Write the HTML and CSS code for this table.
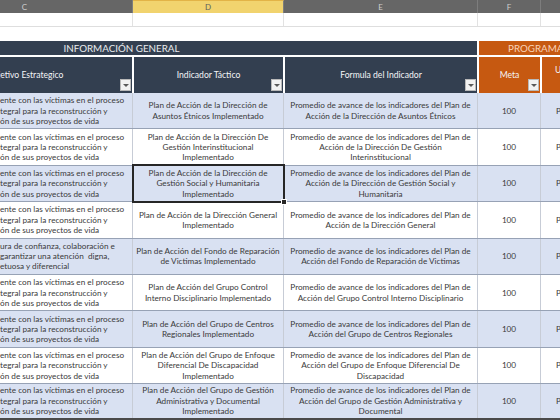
FILE: index.html
```html
<!DOCTYPE html>
<html lang="es">
<head>
<meta charset="utf-8">
<title>Plan de Acción</title>
<link rel="stylesheet" href="styles.css">
</head>
<body>
<div class="sheet">
  <div class="grid colhead">
    <div>C</div><div class="sel">D</div><div>E</div><div>F</div><div>G</div>
  </div>
  <div class="grid blank1">
    <div></div><div></div><div></div><div></div><div></div>
  </div>
  <div class="blank2"></div>
  <div class="banner">
    <div class="info">INFORMACIÓN GENERAL</div>
    <div class="prog">PROGRAMACIÓN</div>
  </div>
  <div class="grid hdr">
    <div class="h navy">Objetivo Estrategico<span class="dd"></span></div>
    <div class="h navy">Indicador Táctico<span class="dd"></span></div>
    <div class="h navy">Formula del Indicador<span class="dd"></span></div>
    <div class="h orange">Meta<span class="dd"></span></div>
    <div class="h orange g"><span>Unidad de</span><span class="l2">Medida</span></div>
  </div>

  <div class="grid row alt">
    <div class="c obj"><span>ente con las víctimas en el proceso</span><span>tegral para la reconstrucción y</span><span>ón de sus proyectos de vida</span></div>
    <div class="c">Plan de Acción de la Dirección de<br>Asuntos Étnicos Implementado</div>
    <div class="c">Promedio de avance de los indicadores del Plan de<br>Acción de la Dirección de Asuntos Étnicos</div>
    <div class="c">100</div>
    <div class="c u">Porcentaje</div>
  </div>
  <div class="grid row">
    <div class="c obj"><span>ente con las víctimas en el proceso</span><span>tegral para la reconstrucción y</span><span>ón de sus proyectos de vida</span></div>
    <div class="c">Plan de Acción de la Dirección De<br>Gestión Interinstitucional<br>Implementado</div>
    <div class="c">Promedio de avance de los indicadores del Plan de<br>Acción de la Dirección De Gestión<br>Interinstitucional</div>
    <div class="c">100</div>
    <div class="c u">Porcentaje</div>
  </div>
  <div class="grid row alt">
    <div class="c obj"><span>ente con las víctimas en el proceso</span><span>tegral para la reconstrucción y</span><span>ón de sus proyectos de vida</span></div>
    <div class="c active">Plan de Acción de la Dirección de<br>Gestión Social y Humanitaria<br>Implementado</div>
    <div class="c">Promedio de avance de los indicadores del Plan de<br>Acción de la Dirección de Gestión Social y<br>Humanitaria</div>
    <div class="c">100</div>
    <div class="c u">Porcentaje</div>
  </div>
  <div class="grid row">
    <div class="c obj"><span>ente con las víctimas en el proceso</span><span>tegral para la reconstrucción y</span><span>ón de sus proyectos de vida</span></div>
    <div class="c">Plan de Acción de la Dirección General<br>Implementado</div>
    <div class="c">Promedio de avance de los indicadores del Plan de<br>Acción de la Dirección General</div>
    <div class="c">100</div>
    <div class="c u">Porcentaje</div>
  </div>
  <div class="grid row alt">
    <div class="c obj"><span>ura de confianza, colaboración e</span><span>garantizar una atención&nbsp; digna,</span><span>etuosa y diferencial</span></div>
    <div class="c">Plan de Acción del Fondo de Reparación<br>de Victimas Implementado</div>
    <div class="c">Promedio de avance de los indicadores del Plan de<br>Acción del Fondo de Reparación de Victimas</div>
    <div class="c">100</div>
    <div class="c u">Porcentaje</div>
  </div>
  <div class="grid row">
    <div class="c obj"><span>ente con las víctimas en el proceso</span><span>tegral para la reconstrucción y</span><span>ón de sus proyectos de vida</span></div>
    <div class="c">Plan de Acción del Grupo Control<br>Interno Disciplinario Implementado</div>
    <div class="c">Promedio de avance de los indicadores del Plan de<br>Acción del Grupo Control Interno Disciplinario</div>
    <div class="c">100</div>
    <div class="c u">Porcentaje</div>
  </div>
  <div class="grid row alt">
    <div class="c obj"><span>ente con las víctimas en el proceso</span><span>tegral para la reconstrucción y</span><span>ón de sus proyectos de vida</span></div>
    <div class="c">Plan de Acción del Grupo de Centros<br>Regionales Implementado</div>
    <div class="c">Promedio de avance de los indicadores del Plan de<br>Acción del Grupo de Centros Regionales</div>
    <div class="c">100</div>
    <div class="c u">Porcentaje</div>
  </div>
  <div class="grid row">
    <div class="c obj"><span>ente con las víctimas en el proceso</span><span>tegral para la reconstrucción y</span><span>ón de sus proyectos de vida</span></div>
    <div class="c">Plan de Acción del Grupo de Enfoque<br>Diferencial De Discapacidad<br>Implementado</div>
    <div class="c">Promedio de avance de los indicadores del Plan de<br>Acción del Grupo de Enfoque Diferencial De<br>Discapacidad</div>
    <div class="c">100</div>
    <div class="c u">Porcentaje</div>
  </div>
  <div class="grid row alt last">
    <div class="c obj"><span>ente con las víctimas en el proceso</span><span>tegral para la reconstrucción y</span><span>ón de sus proyectos de vida</span></div>
    <div class="c">Plan de Acción del Grupo de Gestión<br>Administrativa y Documental<br>Implementado</div>
    <div class="c">Promedio de avance de los indicadores del Plan de<br>Acción del Grupo de Gestión Administrativa y<br>Documental</div>
    <div class="c">100</div>
    <div class="c u">Porcentaje</div>
  </div>
</div>
</body>
</html>
```

FILE: styles.css
```css
html, body {
  margin: 0;
  padding: 0;
}
body {
  width: 560px;
  height: 420px;
  overflow: hidden;
  background: #ffffff;
  font-family: Lato, "Liberation Sans", sans-serif;
}
.sheet {
  margin-left: -83px;
  width: 704px;
}
.grid {
  display: grid;
  grid-template-columns: 216px 151px 194px 63px 80px;
}

/* column letters */
.colhead {
  height: 13px;
  background: #666666;
  color: #cdcdcd;
  font-size: 8px;
}
.colhead > div {
  display: flex;
  align-items: center;
  justify-content: center;
  border-right: 1px solid #7d7d7d;
}
.colhead > .sel {
  background: #f1d36e;
  color: #5d5d5d;
  border-top: 1px solid #e2b347;
}

/* empty spreadsheet rows */
.blank1 {
  height: 14px;
  box-sizing: border-box;
  border-bottom: 1px solid #dedede;
}
.blank1 > div {
  border-right: 1px solid #e2e2e2;
}
.blank2 {
  height: 14px;
}

/* group banner */
.banner {
  display: grid;
  grid-template-columns: 560px 1fr;
  column-gap: 2px;
  height: 14px;
  margin-bottom: 2px;
  font-size: 9.8px;
  line-height: 14px;
  white-space: nowrap;
  overflow: hidden;
}
.banner .info {
  background: #333f50;
  color: #e9ebee;
  text-align: center;
  padding-right: 151px;
}
.banner .prog {
  background: #c65911;
  color: #f9d3b8;
  padding-left: 29px;
  overflow: hidden;
}

/* column titles */
.hdr {
  height: 36px;
}
.h {
  position: relative;
  display: flex;
  align-items: center;
  justify-content: center;
  box-sizing: border-box;
  border-left: 1px solid #ffffff;
  border-right: 1px solid #ffffff;
  color: #f4f5f7;
  font-size: 8.6px;
  white-space: nowrap;
  overflow: hidden;
}
.h.navy {
  background: #333f50;
}
.h.orange {
  background: #c65911;
}
.h.g {
  flex-direction: column;
  align-items: flex-start;
  padding-left: 13px;
  line-height: 10.5px;
}
.h.g .l2 {
  margin-left: 6px;
}
.dd {
  position: absolute;
  right: 1px;
  bottom: 2px;
  width: 11px;
  height: 12px;
  box-sizing: border-box;
  background: #f2f2f2;
  border: 1px solid #b9b9b9;
}
.dd::after {
  content: "";
  position: absolute;
  left: 2px;
  top: 4px;
  border-left: 3px solid transparent;
  border-right: 3px solid transparent;
  border-top: 3px solid #5a5a5a;
}

/* data rows */
.row {
  height: 36.4px;
  box-sizing: border-box;
  border-bottom: 1px solid #97a2b5;
  background: #ffffff;
}
.row.alt {
  background: #d9e1f2;
}
.row.last {
  border-bottom: 3px solid #4a4a4a;
}
.c {
  display: flex;
  align-items: center;
  justify-content: center;
  text-align: center;
  box-sizing: border-box;
  border-right: 1px solid #c7ccd6;
  color: #3a3a3a;
  font-size: 8.2px;
  line-height: 10.3px;
  white-space: nowrap;
}
.c.obj {
  flex-direction: column;
  align-items: flex-start;
  justify-content: center;
  padding-left: 83px;
  text-align: left;
  overflow: hidden;
}
.c.u {
  justify-content: flex-start;
  padding-left: 15px;
  overflow: hidden;
}
.c.active {
  position: relative;
}
.c.active::after {
  content: "";
  position: absolute;
  left: -1px;
  top: -2px;
  right: -2px;
  bottom: -2px;
  border: 2px solid #262626;
}
.c.active::before {
  content: "";
  position: absolute;
  right: -4px;
  bottom: -4px;
  width: 4px;
  height: 4px;
  background: #262626;
  border: 1px solid #ffffff;
  z-index: 2;
}
```
